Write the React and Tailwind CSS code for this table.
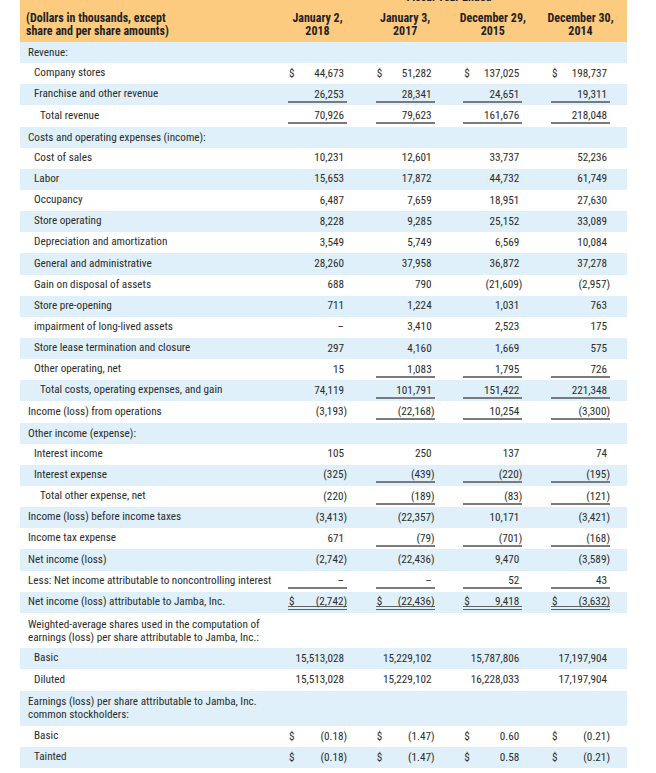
import React from "react";

const rows = [
  { s: "Revenue:" },
  { l: "Company stores", i: 1, v: ["44,673", "51,282", "137,025", "198,737"], d: [1, 1, 1, 1] },
  { l: "Franchise and other revenue", i: 1, v: ["26,253", "28,341", "24,651", "19,311"], u: [1, 1, 1, 1] },
  { l: "Total revenue", i: 2, v: ["70,926", "79,623", "161,676", "218,048"], u: [1, 1, 1, 1] },
  { s: "Costs and operating expenses (income):" },
  { l: "Cost of sales", i: 1, v: ["10,231", "12,601", "33,737", "52,236"] },
  { l: "Labor", i: 1, v: ["15,653", "17,872", "44,732", "61,749"] },
  { l: "Occupancy", i: 1, v: ["6,487", "7,659", "18,951", "27,630"] },
  { l: "Store operating", i: 1, v: ["8,228", "9,285", "25,152", "33,089"] },
  { l: "Depreciation and amortization", i: 1, v: ["3,549", "5,749", "6,569", "10,084"] },
  { l: "General and administrative", i: 1, v: ["28,260", "37,958", "36,872", "37,278"] },
  { l: "Gain on disposal of assets", i: 1, v: ["688", "790", "(21,609)", "(2,957)"] },
  { l: "Store pre-opening", i: 1, v: ["711", "1,224", "1,031", "763"] },
  { l: "impairment of long-lived assets", i: 1, v: ["–", "3,410", "2,523", "175"] },
  { l: "Store lease termination and closure", i: 1, v: ["297", "4,160", "1,669", "575"] },
  { l: "Other operating, net", i: 1, v: ["15", "1,083", "1,795", "726"], u: [0, 1, 1, 1] },
  { l: "Total costs, operating expenses, and gain", i: 2, v: ["74,119", "101,791", "151,422", "221,348"], u: [0, 1, 1, 1] },
  { l: "Income (loss) from operations", i: 0, v: ["(3,193)", "(22,168)", "10,254", "(3,300)"], u: [0, 1, 1, 1] },
  { s: "Other income (expense):" },
  { l: "Interest income", i: 1, v: ["105", "250", "137", "74"] },
  { l: "Interest expense", i: 1, v: ["(325)", "(439)", "(220)", "(195)"], u: [0, 1, 1, 1] },
  { l: "Total other expense, net", i: 2, v: ["(220)", "(189)", "(83)", "(121)"], u: [0, 1, 1, 1] },
  { l: "Income (loss) before income taxes", i: 0, v: ["(3,413)", "(22,357)", "10,171", "(3,421)"] },
  { l: "Income tax expense", i: 0, v: ["671", "(79)", "(701)", "(168)"], u: [0, 1, 1, 1] },
  { l: "Net income (loss)", i: 0, v: ["(2,742)", "(22,436)", "9,470", "(3,589)"] },
  { l: "Less: Net income attributable to noncontrolling interest", i: 0, v: ["–", "–", "52", "43"], u: [1, 1, 1, 1] },
  { l: "Net income (loss) attributable to Jamba, Inc.", i: 0, v: ["(2,742)", "(22,436)", "9,418", "(3,632)"], dd: [1, 1, 1, 1], d: [1, 1, 1, 1] },
  { s: ["Weighted-average shares used in the computation of", "earnings (loss) per share attributable to Jamba, Inc.:"] },
  { l: "Basic", i: 1, v: ["15,513,028", "15,229,102", "15,787,806", "17,197,904"] },
  { l: "Diluted", i: 1, v: ["15,513,028", "15,229,102", "16,228,033", "17,197,904"] },
  { s: ["Earnings (loss) per share attributable to Jamba, Inc.", "common stockholders:"] },
  { l: "Basic", i: 1, v: ["(0.18)", "(1.47)", "0.60", "(0.21)"], d: [1, 1, 1, 1] },
  { l: "Tainted", i: 1, v: ["(0.18)", "(1.47)", "0.58", "(0.21)"], d: [1, 1, 1, 1] },
];

const indentCls = ["pl-[8px]", "pl-[14px]", "pl-[20px]"];

function Cell({ val, dollar, ul, dbl }) {
  const paren = val.endsWith(")");
  let border = "";
  if (dbl) border = "border-b-[4px] border-double border-[#5f6062]";
  else if (ul) border = "border-b-2 border-[#7a7a7c]";
  return (
    <div className={`flex h-[16px] w-[59px] items-start justify-between leading-[15px] ${border}`}>
      <span className="pl-[1px]">{dollar ? "$" : ""}</span>
      <span className={paren ? "" : "pr-[3px]"}>{val}</span>
    </div>
  );
}

export default function App() {
  return (
    <div className="min-h-[773px] w-[656px] bg-white font-['Roboto_Condensed','Liberation_Sans',Arial,sans-serif] text-[11.2px] text-[#2b2b2b]">
      <div className="ml-[20px] w-[607px]">
        <div className="h-[42px] overflow-hidden bg-[#fdcb80] font-bold text-[#231f20]">
          <div className="-mt-[9px] flex h-[12px] text-[12px] leading-[12px]">
            <div className="w-[268px]" />
            <div className="w-[322px] text-center">Fiscal Year Ended</div>
          </div>
          <div className="mt-[9px] flex text-[12px] leading-[12.5px]">
            <div className="w-[268px] pl-[6px]">
              <div>(Dollars in thousands, except</div>
              <div>share and per share amounts)</div>
            </div>
            <div className="flex w-[322px] justify-between">
              {[
                ["January 2,", "2018"],
                ["January 3,", "2017"],
                ["December 29,", "2015"],
                ["December 30,", "2014"],
              ].map((h, k) => (
                <div key={k} className="flex w-[59px] flex-col items-center whitespace-nowrap">
                  <div>{h[0]}</div>
                  <div>{h[1]}</div>
                </div>
              ))}
            </div>
          </div>
        </div>
        {rows.map((r, idx) => {
          const bg = idx % 2 === 0 ? "bg-[#dff0fa]" : "bg-white";
          if (r.s) {
            const lines = Array.isArray(r.s) ? r.s : [r.s];
            return (
              <div
                key={idx}
                className={`${bg} flex flex-col justify-center pl-[8px] leading-[13px] ${lines.length > 1 ? "h-[35.5px]" : "h-[21.15px]"}`}
              >
                {lines.map((t, k) => (
                  <div key={k}>{t}</div>
                ))}
              </div>
            );
          }
          return (
            <div key={idx} className={`${bg} flex h-[21.15px] items-center`}>
              <div className={`w-[268px] whitespace-nowrap ${indentCls[r.i]}`}>{r.l}</div>
              <div className="flex w-[322px] justify-between">
                {r.v.map((val, k) => (
                  <Cell
                    key={k}
                    val={val}
                    dollar={r.d && r.d[k]}
                    ul={r.u && r.u[k]}
                    dbl={r.dd && r.dd[k]}
                  />
                ))}
              </div>
            </div>
          );
        })}
      </div>
    </div>
  );
}
